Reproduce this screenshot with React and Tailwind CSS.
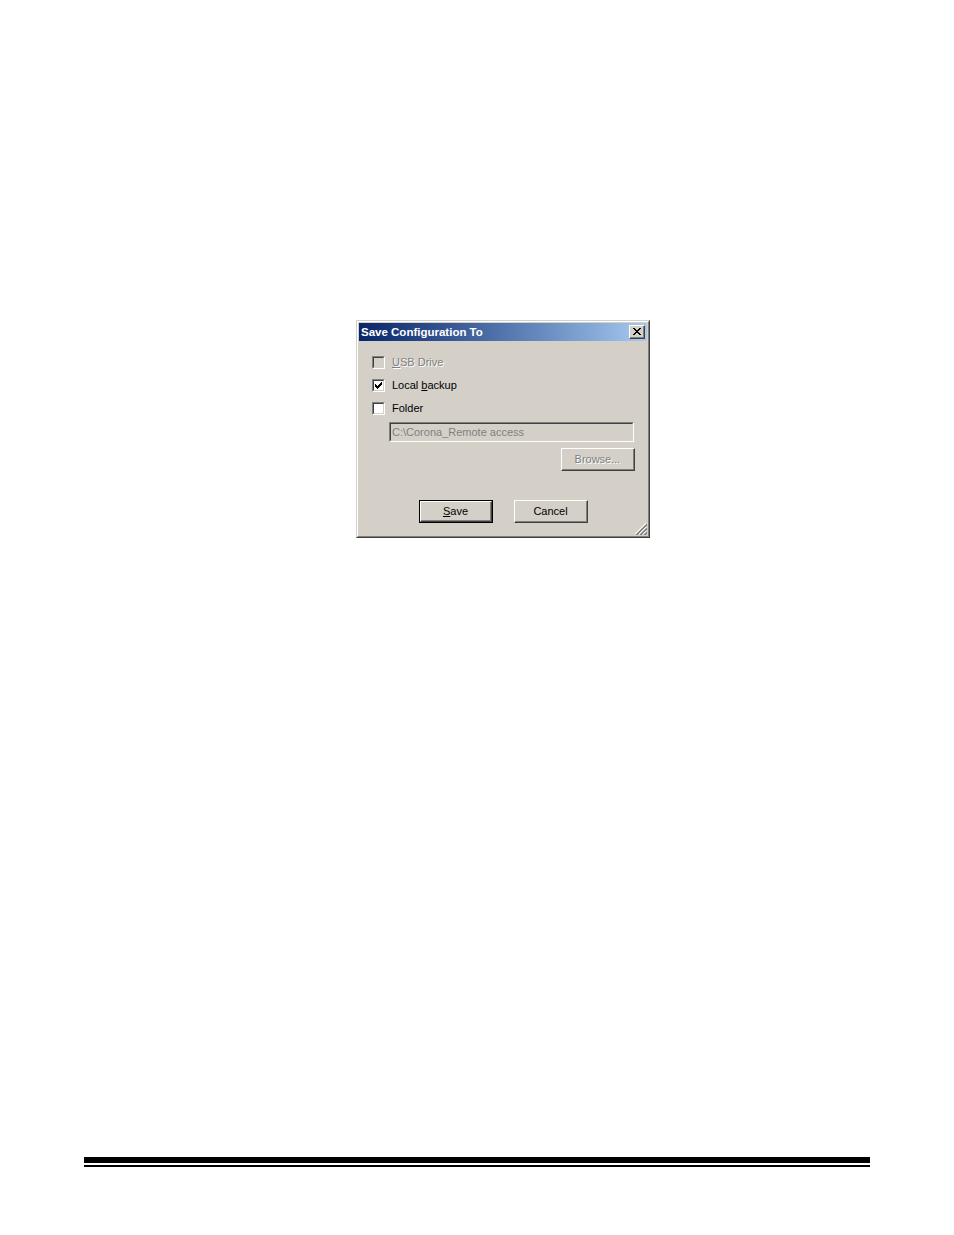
function Check({ checked, disabled }) {
  return (
    <div className="w-[13px] h-[13px] border-t border-l border-t-[#808080] border-l-[#808080] border-b border-r border-b-white border-r-white shrink-0">
      <div className={`w-full h-full border-t border-l border-t-[#404040] border-l-[#404040] border-b border-r border-b-[#d4d0c8] border-r-[#d4d0c8] ${disabled ? 'bg-[#d4d0c8]' : 'bg-white'} flex items-center justify-center`}>
        {checked && (
          <svg width="7" height="7" viewBox="0 0 7 7" shapeRendering="crispEdges">
            <path d="M0 2h1v3h-1zM1 3h1v3h-1zM2 4h1v3h-1zM3 3h1v3h-1zM4 2h1v3h-1zM5 1h1v3h-1zM6 0h1v3h-1z" fill="#000" />
          </svg>
        )}
      </div>
    </div>
  );
}

function Button({ children, disabled, isDefault }) {
  const inner = (
    <div className="w-full h-full border-t border-l border-t-white border-l-white border-b border-r border-b-[#404040] border-r-[#404040]">
      <div className="w-full h-full border-b border-r border-b-[#808080] border-r-[#808080] flex items-center justify-center">
        <span className={disabled ? 'text-[#808080] [text-shadow:1px_1px_0_#fff]' : 'text-black'}>{children}</span>
      </div>
    </div>
  );
  if (isDefault) {
    return <div className="w-[74px] h-[23px] border border-black">{inner}</div>;
  }
  return <div className="w-[74px] h-[23px]">{inner}</div>;
}

export default function App() {
  return (
    <div className="w-[954px] h-[1235px] bg-white flex flex-col" style={{ fontFamily: '"Liberation Sans", Arial, sans-serif' }}>
      <div className="mt-[320px] ml-[356px] w-[294px] h-[218px] relative border-t border-l border-t-[#d4d0c8] border-l-[#d4d0c8] border-b border-r border-b-[#404040] border-r-[#404040]">
        <div className="w-full h-full border-t border-l border-t-white border-l-white border-b border-r border-b-[#808080] border-r-[#808080] bg-[#d4d0c8] p-px flex flex-col text-[11px]">
          {/* title bar */}
          <div className="h-[18px] flex items-center justify-between pl-[2px] pr-[2px] bg-gradient-to-r from-[#0a246a] to-[#a6caf0]">
            <span className="text-white font-bold text-[11.5px] leading-none mt-[2px]">Save Configuration To</span>
            <div className="w-[16px] h-[14px] bg-[#d4d0c8] border-t border-l border-t-white border-l-white border-b border-r border-b-[#404040] border-r-[#404040]">
              <div className="w-full h-full border-b border-r border-b-[#808080] border-r-[#808080] flex items-center justify-center">
                <svg width="8" height="7" viewBox="0 0 8 7" shapeRendering="crispEdges">
                  <path d="M0 0h2v1h-2zM6 0h2v1h-2zM1 1h2v1h-2zM5 1h2v1h-2zM2 2h4v1h-4zM3 3h2v1h-2zM2 4h4v1h-4zM1 5h2v1h-2zM5 5h2v1h-2zM0 6h2v1h-2zM6 6h2v1h-2z" fill="#000" />
                </svg>
              </div>
            </div>
          </div>

          <div className="flex flex-col pl-[13px] pt-[15px]">
            <div className="flex items-center h-[13px] gap-[7px]">
              <Check disabled />
              <span className="text-[#808080] [text-shadow:1px_1px_0_#fff]"><span className="underline">U</span>SB Drive</span>
            </div>
            <div className="flex items-center h-[13px] gap-[7px] mt-[10px]">
              <Check checked />
              <span className="text-black">Local <span className="underline">b</span>ackup</span>
            </div>
            <div className="flex items-center h-[13px] gap-[7px] mt-[10px]">
              <Check />
              <span className="text-black">Folder</span>
            </div>

            <div className="ml-[17px] mt-[7px] w-[245px] h-[20px] border-t border-l border-t-[#808080] border-l-[#808080] border-b border-r border-b-white border-r-white">
              <div className="w-full h-full border-t border-l border-t-[#404040] border-l-[#404040] border-b border-r border-b-[#d4d0c8] border-r-[#d4d0c8] bg-[#d4d0c8] flex items-center pl-[1px]">
                <span className="text-[#808080]">C:\Corona_Remote access</span>
              </div>
            </div>

            <div className="ml-[189px] mt-[6px]">
              <Button disabled>Browse...</Button>
            </div>

            <div className="mt-[29px] flex gap-[21px] ml-[47px]">
              <Button isDefault><span className="underline">S</span>ave</Button>
              <Button>Cancel</Button>
            </div>
          </div>
        </div>

        {/* size grip */}
        <svg className="absolute right-[2px] bottom-[2px]" width="12" height="12" viewBox="0 0 12 12" shapeRendering="crispEdges">
          <path d="M11 0L0 11M11 4L4 11M11 8L8 11" stroke="#fff" strokeWidth="1" />
          <path d="M12 1L1 12M12 2L2 12M12 5L5 12M12 6L6 12M12 9L9 12M12 10L10 12" stroke="#808080" strokeWidth="1" />
        </svg>
      </div>

      <div className="mt-[619px] ml-[84px] w-[786px] h-[6px] bg-black"></div>
      <div className="mt-[2px] ml-[84px] w-[786px] h-[2px] bg-black"></div>
    </div>
  );
}
